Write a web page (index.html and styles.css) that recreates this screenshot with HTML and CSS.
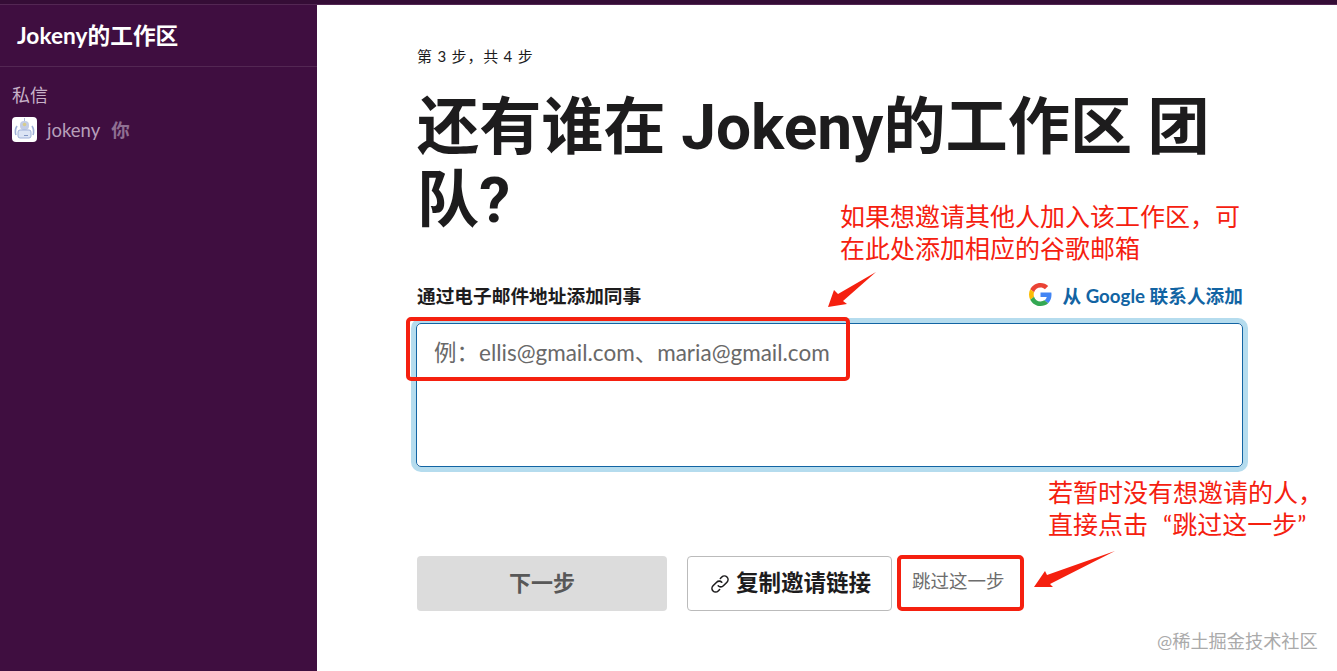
FILE: index.html
```html
<!DOCTYPE html>
<html lang="zh-CN">

<head>
    <meta charset="utf-8">
    <meta name="viewport" content="width=device-width, initial-scale=1.0">
    <title>Jokeny的工作区</title>
    <link rel="stylesheet" href="styles.css">
</head>

<body>
    <div class="topbar"></div>
    <div class="page">
        <aside class="sidebar">
            <div class="team">Jokeny的工作区</div>
            <div class="dm-title">私信</div>
            <div class="dm-row">
                <div class="avatar">
                    <svg width="25" height="25" viewBox="0 0 25 25">
                        <rect x="8" y="4" width="9" height="9" rx="4" fill="#c3cde6"/>
                        <circle cx="12.5" cy="7.5" r="1.8" fill="#d8cc8c"/>
                        <path d="M12.5 1v3" stroke="#aab6d6" stroke-width="1"/>
                        <path d="M5 9c-2 3-2 6-1 9M20 9c2 3 2 6 1 9" stroke="#9fb0d8" stroke-width="1.6" fill="none"/>
                        <rect x="6" y="13" width="13" height="8" rx="2" fill="#dce4f4" stroke="#9fb0d8" stroke-width="1"/>
                        <rect x="12" y="18" width="4" height="1" fill="#8296c4"/>
                    </svg>
                </div>
                <span class="dm-name">jokeny</span>
                <span class="dm-you">你</span>
            </div>
        </aside>

        <main class="content">
            <p class="step">第 3 步，共 4 步</p>
            <h1 class="title"><span>还有谁在 Jokeny的工作区 团</span><span>队?</span></h1>

            <div class="label-row">
                <span class="label">通过电子邮件地址添加同事</span>
                <span class="google">
                    <svg width="23" height="23" viewBox="0 0 48 48">
                        <path fill="#EA4335" d="M24 9.500c3.500 0 6.700 1.200 9.200 3.600l6.900-6.900C35.900 2.400 30.500 0 24 0 14.600 0 6.500 5.400 2.600 13.200l8 6.200C12.500 13.600 17.800 9.500 24 9.500z"/>
                        <path fill="#4285F4" d="M46.980 24.550c0-1.570-.15-3.090-.38-4.550H24v9.020h12.940c-.58 2.960-2.260 5.480-4.780 7.180l7.730 6c4.510-4.180 7.090-10.360 7.090-17.650z"/>
                        <path fill="#FBBC05" d="M10.530 28.590c-.48-1.450-.76-2.990-.76-4.590s.27-3.140.76-4.590l-7.980-6.190C.92 16.460 0 20.120 0 24c0 3.880.92 7.540 2.560 10.780l7.970-6.190z"/>
                        <path fill="#34A853" d="M24 48c6.480 0 11.930-2.130 15.890-5.810l-7.730-6c-2.150 1.450-4.920 2.300-8.160 2.300-6.260 0-11.570-4.220-13.470-9.910l-7.980 6.190C6.510 42.620 14.620 48 24 48z"/>
                    </svg>
                    <span>从 Google 联系人添加</span>
                </span>
            </div>

            <div class="email-box">
                <span class="placeholder">例：ellis@gmail.com、maria@gmail.com</span>
            </div>

            <div class="actions">
                <button class="btn-next">下一步</button>
                <button class="btn-copy">
                    <svg width="24" height="24" viewBox="0 0 20 20" fill="none" stroke="#1d1c1d" stroke-width="1.300" stroke-linecap="round">
                        <path d="M8.500 11.500a3 3 0 0 0 4.300 0l3-3a3 3 0 0 0-4.300-4.300l-1.200 1.200"/>
                        <path d="M11.500 8.500a3 3 0 0 0-4.300 0l-3 3a3 3 0 0 0 4.300 4.300l1.200-1.200"/>
                    </svg>
                    <span>复制邀请链接</span>
                </button>
                <button class="btn-skip">跳过这一步</button>
            </div>
        </main>
    </div>

    <!-- 红色标注 -->
    <div class="mark mark-input"></div>
    <div class="mark mark-skip"></div>
    <p class="note note-top">如果想邀请其他人加入该工作区，可<br>在此处添加相应的谷歌邮箱</p>
    <p class="note note-bottom">若暂时没有想邀请的人，<br>直接点击<span class="quote-open">“</span>跳过这一步<span>”</span></p>
    <svg class="arrows" width="1337" height="671" viewBox="0 0 1337 671">
        <path fill="#f5200f" d="M876 272L843 301 847 304 828 307 834 290 838 294z"/>
        <path fill="#f5200f" d="M1115 551L1050 584 1053 587 1034 587 1045 571 1047 575z"/>
    </svg>
    <div class="watermark">@稀土掘金技术社区</div>
</body>

</html>
```

FILE: styles.css
```css
* {
    margin: 0;
    box-sizing: border-box;
}

body {
    background: #fff;
    font-family: 'Lato', 'Noto Sans CJK SC', sans-serif;
    color: #1d1c1d;
    height: 671px;
    overflow: hidden;
}

.topbar {
    height: 5px;
    background: #350d36;
    border-bottom: 1px solid #532753;
}

.page {
    display: flex;
    height: 666px;
}

.sidebar {
    width: 317px;
    background: #3f0e40;
    flex-shrink: 0;
}

.team {
    height: 62px;
    padding: 17px 0 0 17px;
    font-size: 22.7px;
    line-height: 28px;
    font-weight: 700;
    color: #fff;
    border-bottom: 1px solid #532753;
}

.dm-title {
    margin: 16px 0 0 12px;
    font-size: 18px;
    line-height: 24px;
    color: #c7b2c8;
}

.dm-row {
    display: flex;
    align-items: center;
    margin: 9px 0 0 12px;
    color: #b79fb9;
    font-size: 18.5px;
}

.avatar {
    width: 25px;
    height: 25px;
    background: #fff;
    border-radius: 4px;
    margin-right: 10px;
}

.avatar svg {
    display: block;
}

.dm-name {
    padding-top: 2px;
}

.dm-you {
    margin-left: 11px;
    color: #8f6f92;
    font-weight: 700;
}

.content {
    width: 827px;
    margin-left: 100px;
}

.step {
    margin-top: 41px;
    font-size: 15px;
    line-height: 20px;
    letter-spacing: 0.8px;
}

.title {
    margin-top: 25px;
    font-family: 'Roboto', 'Noto Sans CJK SC', sans-serif;
    font-size: 62.2px;
    line-height: 73px;
    font-weight: 700;
}

.title span {
    display: block;
    width: fit-content;
}

.label-row {
    display: flex;
    justify-content: space-between;
    align-items: center;
    margin-top: 42px;
    height: 30px;
}

.label {
    font-size: 18.7px;
    font-weight: 700;
}

.google {
    display: flex;
    align-items: center;
    gap: 10px;
    margin-right: 1px;
    font-size: 18.7px;
    font-weight: 700;
    color: #1264a3;
}

.email-box {
    width: 827px;
    height: 144px;
    margin: 14px 0 0 -1px;
    padding: 13px 17px;
    border: 1px solid #1264a3;
    border-radius: 5px;
    box-shadow: 0 0 0 5px #b5dcee;
}

.placeholder {
    font-size: 22.5px;
    line-height: 31px;
    color: #696969;
}

.actions {
    display: flex;
    align-items: center;
    margin-top: 89px;
}

.actions button {
    font-family: inherit;
    border-radius: 4px;
}

.btn-next {
    width: 250px;
    height: 55px;
    padding-bottom: 6px;
    background: #dcdcdc;
    border: 0;
    font-size: 22px;
    font-weight: 700;
    color: #585858;
}

.btn-copy {
    display: flex;
    align-items: center;
    justify-content: center;
    gap: 4px;
    width: 205px;
    height: 55px;
    margin-left: 20px;
    background: #fff;
    border: 1px solid #bbb;
    font-size: 22.5px;
    font-weight: 700;
    color: #1d1c1d;
}

.btn-copy span {
    margin-bottom: 6px;
}

.btn-skip {
    margin: 0 0 8px 20px;
    padding: 0;
    background: none;
    border: 0;
    font-size: 18.5px;
    color: #6d6d6d;
}

.mark {
    position: absolute;
    border: 4px solid #f5200f;
    border-radius: 5px;
}

.mark-input {
    left: 406px;
    top: 317px;
    width: 444px;
    height: 64px;
}

.mark-skip {
    left: 897px;
    top: 555px;
    width: 127px;
    height: 56px;
}

.note {
    position: absolute;
    font-size: 25px;
    line-height: 32px;
    color: #f5200f;
    white-space: nowrap;
}

.quote-open {
    padding-left: 15px;
}

.note-top {
    left: 840px;
    top: 200px;
}

.note-bottom {
    left: 1048px;
    top: 476px;
}

.arrows {
    position: absolute;
    left: 0;
    top: 0;
}

.watermark {
    position: absolute;
    left: 1157px;
    top: 630px;
    font-size: 18.2px;
    line-height: 22px;
    color: #aaa;
}
```
